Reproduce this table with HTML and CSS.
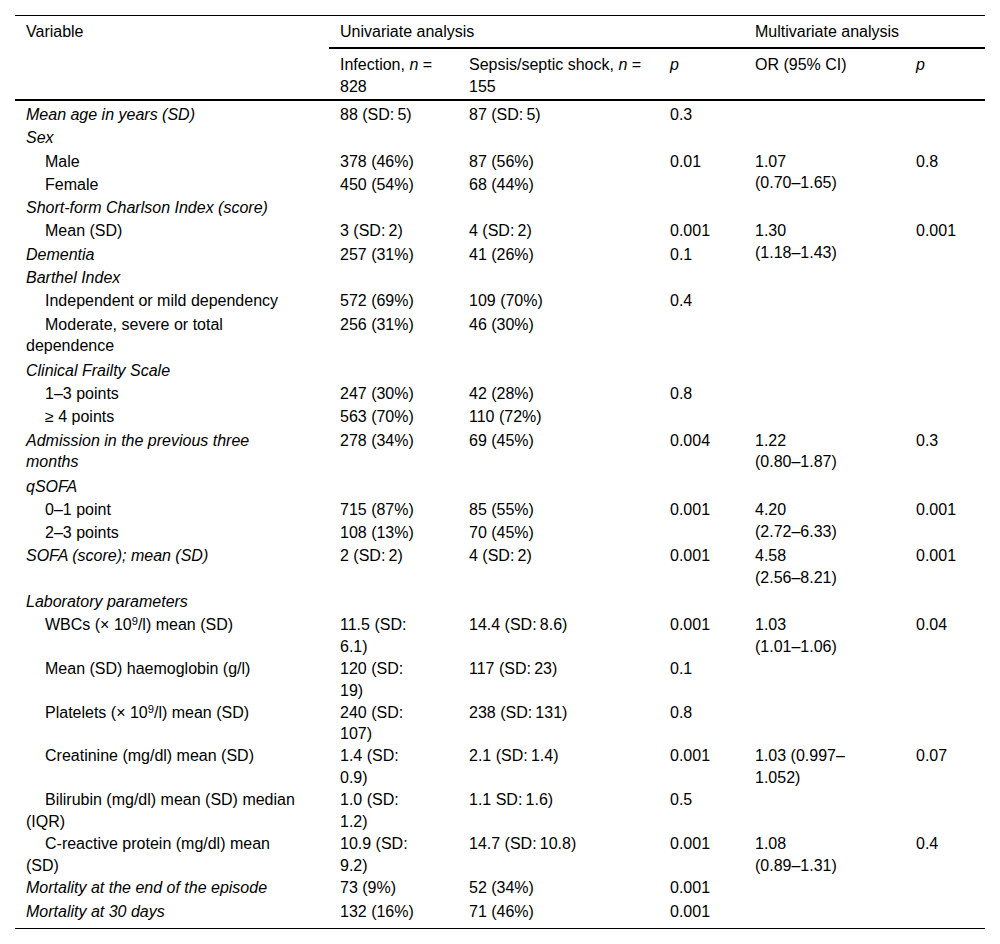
FILE: index.html
```html
<!DOCTYPE html>
<html lang="en">
<head>
<meta charset="utf-8">
<title>Table</title>
<link rel="stylesheet" href="styles.css">
</head>
<body>
<table class="data">
  <colgroup>
    <col class="w-var">
    <col class="w-inf">
    <col class="w-sep">
    <col class="w-p1">
    <col class="w-or">
    <col class="w-p2">
  </colgroup>
  <thead>
    <tr class="h1">
      <th rowspan="2" class="hvar">Variable</th>
      <th colspan="3" class="group">Univariate analysis</th>
      <th colspan="2" class="group">Multivariate analysis</th>
    </tr>
    <tr class="h2">
      <th>Infection, <i>n</i> =<br>828</th>
      <th>Sepsis/septic shock, <i>n</i> =<br>155</th>
      <th><i>p</i></th>
      <th>OR (95% CI)</th>
      <th><i>p</i></th>
    </tr>
  </thead>
  <tbody>
    <tr class="first"><td class="cat">Mean age in years (SD)</td><td>88 (SD:&#8201;5)</td><td>87 (SD:&#8201;5)</td><td>0.3</td><td></td><td></td></tr>
    <tr><td class="cat">Sex</td><td></td><td></td><td></td><td></td><td></td></tr>
    <tr><td class="sub">Male</td><td>378 (46%)</td><td>87 (56%)</td><td>0.01</td><td rowspan="2">1.07<br>(0.70–1.65)</td><td rowspan="2">0.8</td></tr>
    <tr><td class="sub">Female</td><td>450 (54%)</td><td>68 (44%)</td><td></td></tr>
    <tr><td class="cat">Short-form Charlson Index (score)</td><td></td><td></td><td></td><td></td><td></td></tr>
    <tr><td class="sub">Mean (SD)</td><td>3 (SD:&#8201;2)</td><td>4 (SD:&#8201;2)</td><td>0.001</td><td rowspan="2">1.30<br>(1.18–1.43)</td><td rowspan="2">0.001</td></tr>
    <tr><td class="cat">Dementia</td><td>257 (31%)</td><td>41 (26%)</td><td>0.1</td></tr>
    <tr><td class="cat">Barthel Index</td><td></td><td></td><td></td><td></td><td></td></tr>
    <tr><td class="sub">Independent or mild dependency</td><td>572 (69%)</td><td>109 (70%)</td><td>0.4</td><td></td><td></td></tr>
    <tr class="gap"><td class="sub">Moderate, severe or total dependence</td><td>256 (31%)</td><td>46 (30%)</td><td></td><td></td><td></td></tr>
    <tr><td class="cat">Clinical Frailty Scale</td><td></td><td></td><td></td><td></td><td></td></tr>
    <tr><td class="sub">1–3 points</td><td>247 (30%)</td><td>42 (28%)</td><td>0.8</td><td></td><td></td></tr>
    <tr><td class="sub">≥ 4 points</td><td>563 (70%)</td><td>110 (72%)</td><td></td><td></td><td></td></tr>
    <tr class="gap"><td class="cat">Admission in the previous three months</td><td>278 (34%)</td><td>69 (45%)</td><td>0.004</td><td>1.22<br>(0.80–1.87)</td><td>0.3</td></tr>
    <tr><td class="cat">qSOFA</td><td></td><td></td><td></td><td></td><td></td></tr>
    <tr><td class="sub">0–1 point</td><td>715 (87%)</td><td>85 (55%)</td><td>0.001</td><td rowspan="2">4.20<br>(2.72–6.33)</td><td rowspan="2">0.001</td></tr>
    <tr><td class="sub">2–3 points</td><td>108 (13%)</td><td>70 (45%)</td><td></td></tr>
    <tr class="gap"><td class="cat">SOFA (score); mean (SD)</td><td>2 (SD:&#8201;2)</td><td>4 (SD:&#8201;2)</td><td>0.001</td><td>4.58<br>(2.56–8.21)</td><td>0.001</td></tr>
    <tr><td class="cat">Laboratory parameters</td><td></td><td></td><td></td><td></td><td></td></tr>
    <tr class="lab"><td class="sub">WBCs (× 10<sup>9</sup>/l) mean (SD)</td><td>11.5 (SD:&#8201;6.1)</td><td>14.4 (SD:&#8201;8.6)</td><td>0.001</td><td>1.03<br>(1.01–1.06)</td><td>0.04</td></tr>
    <tr class="lab"><td class="sub">Mean (SD) haemoglobin (g/l)</td><td>120 (SD:&#8201;19)</td><td>117 (SD:&#8201;23)</td><td>0.1</td><td></td><td></td></tr>
    <tr class="lab"><td class="sub">Platelets (× 10<sup>9</sup>/l) mean (SD)</td><td>240 (SD:&#8201;107)</td><td>238 (SD:&#8201;131)</td><td>0.8</td><td></td><td></td></tr>
    <tr class="lab"><td class="sub">Creatinine (mg/dl) mean (SD)</td><td>1.4 (SD:&#8201;0.9)</td><td>2.1 (SD:&#8201;1.4)</td><td>0.001</td><td>1.03 (0.997–<br>1.052)</td><td>0.07</td></tr>
    <tr class="lab"><td class="sub">Bilirubin (mg/dl) mean (SD) median (IQR)</td><td>1.0 (SD:&#8201;1.2)</td><td>1.1 SD:&#8201;1.6)</td><td>0.5</td><td></td><td></td></tr>
    <tr class="lab"><td class="sub">C-reactive protein (mg/dl) mean (SD)</td><td>10.9 (SD:&#8201;9.2)</td><td>14.7 (SD:&#8201;10.8)</td><td>0.001</td><td>1.08<br>(0.89–1.31)</td><td>0.4</td></tr>
    <tr><td class="cat">Mortality at the end of the episode</td><td>73 (9%)</td><td>52 (34%)</td><td>0.001</td><td></td><td></td></tr>
    <tr class="last"><td class="cat">Mortality at 30 days</td><td>132 (16%)</td><td>71 (46%)</td><td>0.001</td><td></td><td></td></tr>
  </tbody>
</table>
</body>
</html>
```

FILE: styles.css
```css
html, body {
  margin: 0;
  padding: 0;
  background: #ffffff;
}

body {
  padding: 15px 15px 0 15px;
  font-family: "Liberation Sans", Arial, sans-serif;
  font-size: 16px;
  color: #000;
}

.data {
  width: 970px;
  table-layout: fixed;
  border-collapse: collapse;
  border-top: 1px solid #000;
  border-bottom: 1px solid #000;
  line-height: 21.7px;
}

.w-var { width: 314px; }
.w-inf { width: 129px; }
.w-sep { width: 201px; }
.w-p1 { width: 85px; }
.w-or { width: 161px; }
.w-p2 { width: 80px; }

th {
  font-weight: normal;
  text-align: left;
  vertical-align: top;
  padding: 0 11px;
  line-height: 22px;
}

.h1 th {
  padding-top: 5px;
  padding-bottom: 4px;
}

.h1 .group {
  border-bottom: 2px solid #000;
}

.h2 th {
  padding-top: 5px;
  padding-bottom: 1px;
}

thead {
  border-bottom: 2px solid #000;
}

td {
  vertical-align: top;
  text-align: left;
  padding: 0.8px 11px;
}

tbody td:first-child {
  padding-right: 33px;
}

tbody td:nth-child(2) {
  padding-right: 38px;
}

.first td {
  padding-top: 3px;
}

.gap td {
  padding-bottom: 1.8px;
}

.lab td {
  padding-top: 0.2px;
  padding-bottom: 0.2px;
}

.last td {
  padding-bottom: 5.5px;
}

.cat {
  font-style: italic;
}

.sub {
  text-indent: 19px;
}

sup {
  font-size: 0.7em;
  line-height: 0;
  vertical-align: 0.45em;
}
```
